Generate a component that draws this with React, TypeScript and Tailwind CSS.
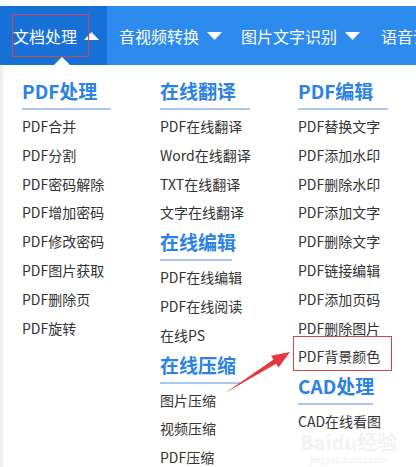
import React from 'react';

type Section = { title: string; line: number; items: string[] };

const font = { fontFamily: '"Noto Sans CJK SC", "Microsoft YaHei", sans-serif' };

const columns: Section[][] = [
    [
        {
            title: 'PDF处理',
            line: 89,
            items: ['PDF合并', 'PDF分割', 'PDF密码解除', 'PDF增加密码', 'PDF修改密码', 'PDF图片获取', 'PDF删除页', 'PDF旋转'],
        },
    ],
    [
        { title: '在线翻译', line: 90, items: ['PDF在线翻译', 'Word在线翻译', 'TXT在线翻译', '文字在线翻译'] },
        { title: '在线编辑', line: 72, items: ['PDF在线编辑', 'PDF在线阅读', '在线PS'] },
        { title: '在线压缩', line: 82, items: ['图片压缩', '视频压缩', 'PDF压缩'] },
    ],
    [
        {
            title: 'PDF编辑',
            line: 90,
            items: ['PDF替换文字', 'PDF添加水印', 'PDF删除水印', 'PDF添加文字', 'PDF删除文字', 'PDF链接编辑', 'PDF添加页码', 'PDF删除图片', 'PDF背景颜色'],
        },
        { title: 'CAD处理', line: 75, items: ['CAD在线看图'] },
    ],
];

const navTabs = ['音视频转换', '图片文字识别'];

function Caret({ up }: { up?: boolean }) {
    return (
        <svg width="15" height="8" viewBox="0 0 15 8" className="shrink-0">
            <polygon points={up ? '7.5,0 15,8 0,8' : '0,0 15,0 7.5,8'} fill="#fff" />
        </svg>
    );
}

export default function App() {
    return (
        <div className="relative w-[416px] h-[467px] overflow-hidden bg-white" style={font}>
            {/* Top nav */}
            <div className="mt-[6px] h-[59px] bg-[#2d8bed] flex items-stretch whitespace-nowrap text-white text-[16px]">
                <div className="relative flex items-center gap-[7px] pl-[13px] pr-[8px] bg-[#1770d6]">
                    <span>文档处理</span>
                    <Caret up />
                    {/* notch */}
                    <svg width="16" height="8" viewBox="0 0 16 8" className="absolute bottom-0 left-[54px]">
                        <polygon points="8,0 16,8 0,8" fill="#fff" />
                    </svg>
                </div>
                {navTabs.map((t) => (
                    <div key={t} className="flex items-center gap-[8px] pl-[12px] pr-[7px]">
                        <span>{t}</span>
                        <Caret />
                    </div>
                ))}
                <div className="flex items-center pl-[14px]">
                    <span>语音识别</span>
                </div>
            </div>

            {/* Dropdown panel */}
            <div className="flex h-[402px] border-l-[3px] border-[#efefef] pl-[19px] pt-[11px]">
                {columns.map((col, ci) => (
                    <div key={ci} className="w-[138px] shrink-0 flex flex-col">
                        {col.map((sec) => (
                            <div key={sec.title} className="flex flex-col">
                                <div className="h-[29px] leading-[29px] text-[19px] font-bold text-[#2b82e3]">{sec.title}</div>
                                <div className="mt-[3px] h-[2px] bg-[#a9c9ef]" style={{ width: sec.line }} />
                                <div className="mt-[2px] flex flex-col">
                                    {sec.items.map((it) => (
                                        <div key={it} className="h-[28.8px] leading-[28.8px] text-[14px] text-[#333]">
                                            {it}
                                        </div>
                                    ))}
                                </div>
                            </div>
                        ))}
                    </div>
                ))}
            </div>

            {/* annotations: boxes + arrow */}
            <svg className="absolute left-0 top-0 pointer-events-none" width="416" height="467" viewBox="0 0 416 467">
                <rect x="12.5" y="14.5" width="76" height="42" fill="none" stroke="#d2454e" strokeWidth="1" />
                <rect x="293.5" y="336.5" width="98" height="34" fill="none" stroke="#d9414a" strokeWidth="1" />
                <polygon
                    points="225,393 273.5,359.5 271.1,355.7 290,352 278.5,367.5 276.1,363.7"
                    fill="#e8383d"
                />
            </svg>

            {/* watermark */}
            <div className="absolute left-[300px] top-[432px] flex flex-col items-center leading-none pointer-events-none">
                <span className="text-[20px] font-bold text-[#f2f2f2]">Baidu经验</span>
                <span className="mt-[3px] text-[9px] text-[#f0f0f0]">jingyan.baidu.com</span>
            </div>
        </div>
    );
}
